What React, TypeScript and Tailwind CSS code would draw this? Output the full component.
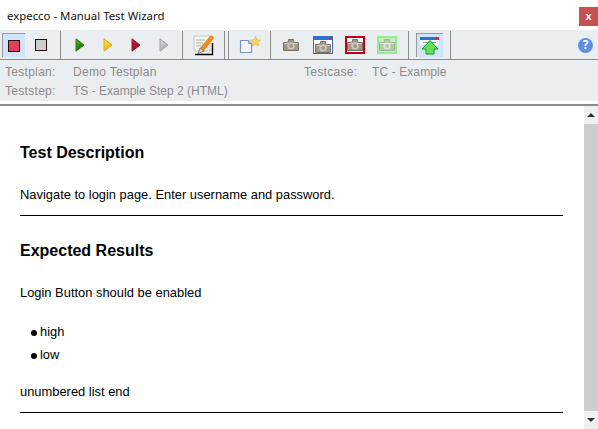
function StopIcon({ fill }: { fill: string }) {
  return <div className={`h-3 w-3 border border-[#2a0a10] ${fill}`} />;
}

function PlayIcon({ from, to, edge }: { from: string; to: string; edge: string }) {
  return (
    <svg width="10" height="14" viewBox="0 0 10 14">
      <defs>
        <linearGradient id={`g${from.slice(1)}`} x1="0" y1="0" x2="0.6" y2="1">
          <stop offset="0" stopColor={from} />
          <stop offset="1" stopColor={to} />
        </linearGradient>
      </defs>
      <path d="M1 .8 9 7 1 13.2z" fill={`url(#g${from.slice(1)})`} stroke={edge} strokeWidth="1" />
    </svg>
  );
}

function NoteIcon() {
  return (
    <svg width="22" height="22" viewBox="0 0 22 22">
      <path d="M1 2h16v15H1z" fill="#f4f4ee" stroke="#c8c8c0" />
      <path d="M3 6h9M3 9h7M3 12h5" stroke="#b0b0a8" />
      <path d="M19.500 9v11.500H2" fill="none" stroke="#000" strokeWidth="1.4" />
      <path d="M7 14 17.500 1.500q3-.5 3.500 2.500L11 17z" fill="#f08a24" />
      <path d="M7 14l4 3-6 2.500z" fill="#f0d8b0" stroke="#444" strokeWidth=".6" />
    </svg>
  );
}

function NewIcon() {
  return (
    <svg width="22" height="18" viewBox="0 0 22 18">
      <path d="M1.500 4.500h8l3 3v9h-11z" fill="#f2f5fc" stroke="#7f92c4" strokeWidth="1.2" />
      <path d="M9.500 4.500v3h3" fill="#cfd8ee" stroke="#7f92c4" />
      <path d="m16.500 .5 1.500 3.300 3.500.4-2.600 2.400.7 3.400-3.100-1.700-3.100 1.700.7-3.400-2.600-2.400 3.500-.4z" fill="#f8d854" stroke="#d8b040" strokeWidth=".6" />
    </svg>
  );
}

function Camera({ light }: { light?: boolean }) {
  const body = light ? "#b4c8a8" : "#a09888";
  const hi = light ? "#dfe8d8" : "#d2ccc0";
  const edge = light ? "#a0b498" : "#7a7266";
  return (
    <svg width="16" height="12" viewBox="0 0 16 12">
      <path d="M.5 3.500h3.500l1.500-1.500V.5h5V2l1.500 1.500h3.500v8H.5z" fill={body} stroke={edge} />
      <path d="M1 4h14v1H1z" fill={hi} />
      <circle cx="8" cy="7" r="3.600" fill={hi} />
      <circle cx="8" cy="7" r="2" fill={body} />
    </svg>
  );
}

function UploadIcon() {
  return (
    <svg width="20" height="20" viewBox="0 0 20 20">
      <path d="M0 1h19v8H0z" fill="#f4f8ff" />
      <path d="M0 1h19v3H0z" fill="#2a72d8" />
      <path d="M16 1h3v2h-3z" fill="#e0203a" />
      <path d="M3 6h5v1H3zM11 6h5v1h-5z" fill="#8a9ab0" />
      <path d="M10 4.500 18 13h-4v5H6v-5H2z" fill="#66e05a" stroke="#0f9a14" />
    </svg>
  );
}

function Divider() {
  return <div className="h-full w-px shrink-0 bg-[#8c8c8c]" />;
}

function ToolSlot({ children, className = "" }: { children: React.ReactNode; className?: string }) {
  return <div className={`flex h-full shrink-0 items-center justify-center ${className}`}>{children}</div>;
}

function Toolbar() {
  return (
    <div className="flex h-[30px] shrink-0 items-stretch border-b border-[#8c8c8c] bg-[#ebeef1] pt-px">
      <ToolSlot className="w-[60px] justify-start pl-[2px]">
        <div className="flex h-[24px] w-[23px] items-center justify-center border-t border-l border-[#9a9a9a] bg-[#cfe4f8]">
          <StopIcon fill="bg-[#e0405a]" />
        </div>
        <div className="flex w-[32px] justify-center">
          <StopIcon fill="bg-[#cdcdcd]" />
        </div>
      </ToolSlot>
      <Divider />
      <ToolSlot className="w-[121px] justify-start gap-[18px] pl-[14px]">
        <PlayIcon from="#58c020" to="#106808" edge="#2c7a12" />
        <PlayIcon from="#ffe850" to="#f0b010" edge="#d8a818" />
        <PlayIcon from="#e02040" to="#801020" edge="#901828" />
        <PlayIcon from="#dcdcdc" to="#a8a8a8" edge="#a0a0a0" />
      </ToolSlot>
      <Divider />
      <ToolSlot className="w-[41px]"><NoteIcon /></ToolSlot>
      <Divider />
      <div className="w-[3px] shrink-0" />
      <Divider />
      <ToolSlot className="w-[41px]"><NewIcon /></ToolSlot>
      <Divider />
      <ToolSlot className="w-[137px] justify-start gap-[8px] pl-[12px]">
        <div className="mr-[7px]"><Camera /></div>
        <div className="-ml-px flex h-[18px] w-[20px] flex-col items-center border border-[#3a6cc0] bg-white">
          <div className="flex h-[3px] w-full justify-end bg-[#2a72d8]"><div className="h-[2px] w-[2px] bg-[#e0203a]" /></div>
          <div className="mt-px"><Camera /></div>
        </div>
        <div className="ml-[4px] flex h-[18px] w-[20px] items-center justify-center border-2 border-[#c00010] bg-white"><Camera /></div>
        <div className="ml-[4px] flex h-[18px] w-[20px] items-center justify-center border-2 border-[#90ee90] bg-[#c8f0c0]"><Camera light /></div>
      </ToolSlot>
      <Divider />
      <ToolSlot className="w-[41px]">
        <div className="flex h-[24px] w-[27px] items-center justify-center border-t border-l border-[#9a9a9a] bg-[#cfe4f8]">
          <UploadIcon />
        </div>
      </ToolSlot>
      <Divider />
      <div className="flex flex-1 items-center justify-end pr-[5px]">
        <div className="flex h-[15px] w-[15px] items-center justify-center rounded-full bg-[#5f8fe0] text-[12px] leading-none font-bold text-white">?</div>
      </div>
    </div>
  );
}

function InfoPanel() {
  return (
    <div className="grid h-[41px] shrink-0 grid-cols-[68px_231px_68px_1fr] content-start bg-[#ebeef1] pt-[3px] pl-[5px] font-['Liberation_Sans',sans-serif] text-[12px] leading-[19px] tracking-[0.3px] text-[#8a8a8a]">
      <span>Testplan:</span>
      <span>Demo Testplan</span>
      <span>Testcase:</span>
      <span className="tracking-[0.1px]">TC - Example</span>
      <span>Teststep:</span>
      <span className="col-span-3 tracking-normal">TS - Example Step 2 (HTML)</span>
    </div>
  );
}

function Rule() {
  return <hr className="border-t border-black" />;
}

function Content() {
  return (
    <div className="min-w-0 flex-1 pt-[37px] pr-[21px] pl-[20px] font-['Liberation_Sans',sans-serif] text-[12.9px] leading-[16px] text-black">
      <h2 className="text-[16px] leading-[20px] font-bold">Test Description</h2>
      <p className="mt-[24px]">Navigate to login page. Enter username and password.</p>
      <div className="mt-[12px]"><Rule /></div>
      <h2 className="mt-[25px] text-[16px] leading-[20px] font-bold">Expected Results</h2>
      <p className="mt-[24px]">Login Button should be enabled</p>
      <ul className="mt-[23px] flex flex-col gap-[7px]">
        <li className="flex items-center gap-[3px] pl-[11px]">
          <span className="mt-[2px] h-[6px] w-[6px] rounded-full bg-black" />high
        </li>
        <li className="flex items-center gap-[3px] pl-[11px]">
          <span className="mt-[2px] h-[6px] w-[6px] rounded-full bg-black" />low
        </li>
      </ul>
      <p className="mt-[21px]">unumbered list end</p>
      <div className="mt-[12px]"><Rule /></div>
    </div>
  );
}

function Scrollbar() {
  return (
    <div className="flex w-[14px] shrink-0 flex-col bg-[#f0f0f0]">
      <div className="flex h-[18px] shrink-0 items-center justify-center">
        <div className="h-0 w-0 border-x-[4px] border-b-[4px] border-x-transparent border-b-[#333]" />
      </div>
      <div className="flex-1 bg-[#cdcdcd]" />
      <div className="flex h-[18px] shrink-0 items-center justify-center">
        <div className="h-0 w-0 border-x-[4px] border-t-[4px] border-x-transparent border-t-[#333]" />
      </div>
    </div>
  );
}

export default function App() {
  return (
    <div className="flex h-[429px] w-[598px] flex-col overflow-hidden bg-white">
      <div className="flex h-[30px] shrink-0 items-start justify-between bg-white">
        <span className="mt-[7px] ml-[7px] font-['Noto_Sans',sans-serif] text-[11.4px] leading-[18px] text-[#111]">
          expecco - Manual Test Wizard
        </span>
        <div className="mt-[7px] flex h-[19px] w-[19px] items-center justify-center bg-[#c75050] font-['Liberation_Sans',sans-serif] text-[11px] leading-none font-bold text-white">
          x
        </div>
      </div>
      <Toolbar />
      <InfoPanel />
      <div className="h-[3px] shrink-0 bg-white" />
      <div className="h-[2px] shrink-0 bg-[#8c8c8c]" />
      <div className="flex min-h-0 flex-1">
        <Content />
        <Scrollbar />
      </div>
    </div>
  );
}
